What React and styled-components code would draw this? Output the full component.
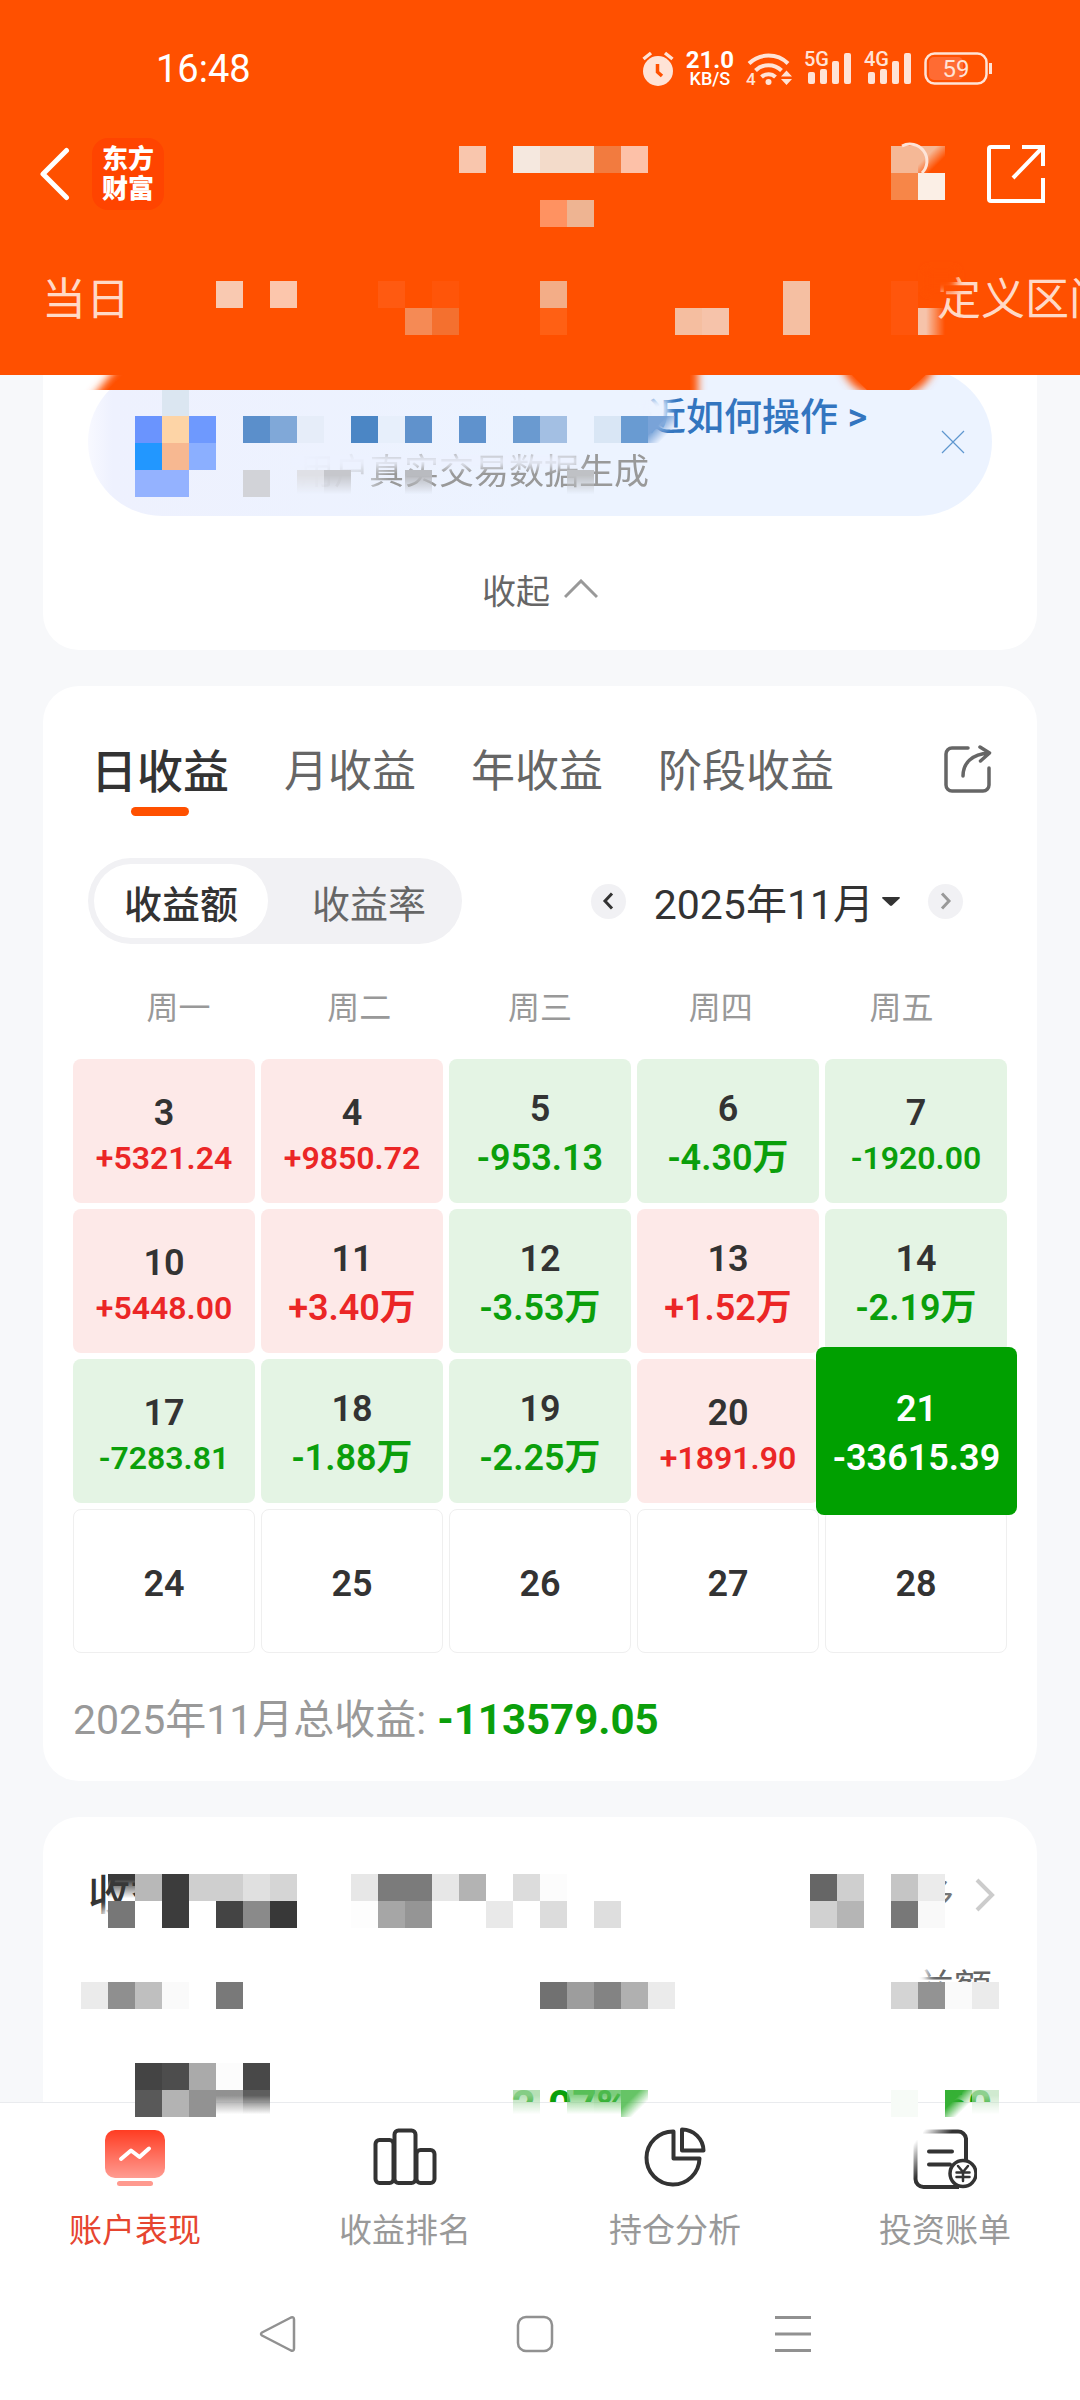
import React from "react";
import styled, { createGlobalStyle, css } from "styled-components";

const GlobalStyle = createGlobalStyle`
  *, *::before, *::after { box-sizing: border-box; }
  html, body, #root { height: 100%; }
  body {
    margin: 0;
    background: #f7f8fa;
    font-family: Roboto, "Noto Sans CJK SC", sans-serif;
    color: #333;
  }
  button {
    border: 0;
    padding: 0;
    background: none;
    font: inherit;
    color: inherit;
    cursor: pointer;
  }
  a { color: inherit; text-decoration: none; }
  ul { margin: 0; padding: 0; list-style: none; }
  p, h1, h2 { margin: 0; }
`;

const CELL = 27;

const Page = styled.div`
  display: flex;
  flex-direction: column;
  height: 100%;
  overflow: hidden;
`;

/* ---------- privacy mosaic ---------- */

const MosaicLayer = styled.svg`
  position: absolute;
  inset: 0;
  width: 100%;
  height: 100%;
  overflow: visible;
  pointer-events: none;
`;

const SharedDefs = styled.svg`
  position: absolute;
  width: 0;
  height: 0;
`;

function Defs() {
  return (
    <SharedDefs aria-hidden="true">
      <defs>
        <linearGradient id="down" x1="0" y1="0" x2="0" y2="1">
          <stop offset="0.2" stopColor="#fff" />
          <stop offset="0.9" stopColor="#000" />
        </linearGradient>
        <linearGradient id="right" x1="0" y1="0" x2="1" y2="0">
          <stop offset="0.3" stopColor="#fff" />
          <stop offset="1" stopColor="#000" />
        </linearGradient>
        <linearGradient id="corner" x1="0" y1="0" x2="1" y2="1">
          <stop offset="0.35" stopColor="#fff" />
          <stop offset="0.7" stopColor="#000" />
        </linearGradient>
        {["down", "right", "corner"].map((name) => (
          <mask key={name} id={`fade-${name}`} maskContentUnits="objectBoundingBox">
            <rect width="1" height="1" fill={`url(#${name})`} />
          </mask>
        ))}
        <filter id="soft" x="-50%" y="-50%" width="200%" height="200%">
          <feGaussianBlur stdDeviation="4" />
        </filter>
      </defs>
    </SharedDefs>
  );
}

/* cells: [column, row, colour, fade?]; veils: [x, y, width, height, colour] */
function Mosaic({ left, top, cells, veils = [], children }) {
  return (
    <MosaicLayer aria-hidden="true">
      {veils.map(([x, y, w, h, fill]) => (
        <rect key={`${x}-${y}`} x={x - left} y={y - top} width={w} height={h} fill={fill} filter="url(#soft)" />
      ))}
      {cells.map(([c, r, fill, fade]) => (
        <rect
          key={`${c}-${r}`}
          x={c * CELL - left}
          y={r * CELL + 11 - top}
          width={CELL}
          height={CELL}
          fill={fill}
          shapeRendering="crispEdges"
          mask={fade ? `url(#fade-${fade})` : undefined}
        />
      ))}
      {children}
    </MosaicLayer>
  );
}

const headerCells = [
  [17, 5, "#f9c6ad"], [19, 5, "#f5e8df"], [20, 5, "#f3dbca"], [21, 5, "#f3dbca"], [22, 5, "#f27b3f"], [23, 5, "#fdc1a8"],
  [20, 7, "#ff9261"], [21, 7, "#eeb492"],
  [33, 5, "#f5b896"], [34, 5, "#f5b896", "corner"], [33, 6, "#f78648"], [34, 6, "#fbefe6"],
  [8, 10, "#f9c9b1"], [10, 10, "#fcc6ac"], [14, 10, "#ff5a11"], [16, 10, "#ff5509"], [20, 10, "#f3ad87"], [29, 10, "#f5bfa2"],
  [15, 11, "#f58a55"], [16, 11, "#f4702f"], [20, 11, "#ff6014"], [25, 11, "#f5bea0"], [26, 11, "#f6c3aa"], [29, 11, "#f5bfa2"],
  [33, 10, "#ff560c"], [33, 11, "#ff560c"], [34, 11, "#f6c3aa", "right"],
];

const bannerCells = [
  [6, 14, "#dbe6f1"],
  [5, 15, "#6a94fe"], [6, 15, "#fdd4a6"], [7, 15, "#6e99fe"], [9, 15, "#5b8fcb"], [10, 15, "#80a8d8"], [11, 15, "#e6edf9"],
  [13, 15, "#4b86c5"], [14, 15, "#e7effb"], [15, 15, "#6092cc"], [17, 15, "#5f92cd"], [19, 15, "#6a9ad0"], [20, 15, "#a3bfe3"],
  [22, 15, "#d9e6f5"], [23, 15, "#699bd2"], [24, 15, "#79a3d8", "corner"],
  [5, 16, "#2297ff"], [6, 16, "#f7b891"], [7, 16, "#8bafff"],
  [5, 17, "#94b2ff"], [6, 17, "#94b2ff"],
  [9, 17, "#d2d3d8"], [11, 17, "#dfe0e6", "down"], [12, 17, "#c6c7cc", "down"], [15, 17, "#b9bbc0", "down"], [21, 17, "#bfc1c5", "down"],
];

const rankCells = [
  [4, 69, "#3a3a3a", "down"], [5, 69, "#b8b8b8"], [6, 69, "#3c3c3c"], [7, 69, "#cfcfcf"], [8, 69, "#cfcfcf"], [9, 69, "#e0e0e0"], [10, 69, "#d5d5d5"],
  [13, 69, "#e7e7e7"], [14, 69, "#7b7b7b"], [15, 69, "#7b7b7b"], [16, 69, "#e7e7e7"], [17, 69, "#b3b3b3"], [19, 69, "#dcdcdc"], [20, 69, "#fcfcfc"],
  [30, 69, "#666"], [31, 69, "#cfcfcf"], [33, 69, "#c5c5c5"], [34, 69, "#ebebeb"],
  [4, 70, "#777"], [5, 70, "#fff"], [6, 70, "#3c3c3c"], [8, 70, "#444"], [9, 70, "#8a8a8a"], [10, 70, "#383838"],
  [13, 70, "#fdfdfd"], [14, 70, "#a6a6a6"], [15, 70, "#959595"], [18, 70, "#e9e9e9"], [20, 70, "#dcdcdc"], [22, 70, "#dedede"],
  [30, 70, "#d1d1d1"], [31, 70, "#b5b5b5"], [33, 70, "#787878"], [34, 70, "#f9f9f9"],
  [3, 73, "#ebebeb"], [4, 73, "#8f8f8f"], [5, 73, "#bfbfbf"], [6, 73, "#fafafa"], [8, 73, "#797979"],
  [20, 73, "#717171"], [21, 73, "#9d9d9d"], [22, 73, "#838383"], [23, 73, "#b0b0b0"], [24, 73, "#ebebeb"],
  [33, 73, "#d4d4d4"], [34, 73, "#939393"], [35, 73, "#fafafa"], [36, 73, "#ebebeb"],
];

const tabBarCells = [
  [5, 76, "#444"], [6, 76, "#4d4d4d"], [7, 76, "#aaa"], [8, 76, "#fcfcfc"], [9, 76, "#484848"],
  [5, 77, "#595959"], [6, 77, "#b3b3b3"], [7, 77, "#929292"], [8, 77, "#919191", "down"], [9, 77, "#5e5e5e", "down"],
  [19, 77, "#a4d8a4cc", "down"], [21, 77, "#6cc76ccc", "down"], [22, 77, "#5cbf5ccc", "down"], [23, 77, "#40b540cc", "corner"],
  [33, 77, "#f7fbf7"], [35, 77, "#35b035", "corner"], [36, 77, "#bfe3bfbb", "down"],
];

/* ---------- header ---------- */

const Header = styled.header`
  position: relative;
  z-index: 1;
  flex: none;
  padding-bottom: 45px;
  background: #ff5000;
  color: #fff;
`;

const StatusBar = styled.div`
  display: flex;
  align-items: center;
  justify-content: space-between;
  height: 138px;
  padding: 0 88px 0 156px;
  font-size: 38px;
`;

const StatusIcons = styled.div`
  display: flex;
  align-items: center;
  gap: 12px;
  color: #ffe3d6;

  svg { overflow: visible; }
`;

const Speed = styled.span`
  display: flex;
  flex-direction: column;
  align-items: center;
  color: #fff;
  font-size: 18px;
  font-weight: 500;
  line-height: 18px;

  strong {
    font-size: 24px;
    font-weight: 700;
    line-height: 20px;
  }
`;

const StatusText = styled.text`
  fill: currentColor;
  font-size: ${(p) => p.$size}px;
  font-weight: ${(p) => p.$weight || 400};
`;

const NavBar = styled.nav`
  display: flex;
  align-items: center;
  gap: 22px;
  height: 72px;
  padding: 0 34px 0 38px;
`;

const IconButton = styled.button`
  display: flex;
  flex: none;
`;

const Logo = styled.h1`
  width: 72px;
  padding: 6px 0;
  border-radius: 16px;
  background: #ff4400;
  font-size: 26px;
  font-weight: 900;
  line-height: 30px;
  text-align: center;
`;

const Spacer = styled.span`
  flex: 1;
`;

const PeriodTabs = styled.div`
  display: flex;
  justify-content: space-between;
  overflow: hidden;
  margin-top: 60px;
  padding-left: 42px;
  color: #ffd9c7;
  font-size: 44px;
  line-height: 60px;
  white-space: nowrap;
`;

const CutOffTab = styled.button`
  margin-right: -33px;
`;

function SignalIcon({ label }) {
  return (
    <svg width="48" height="36" viewBox="0 0 48 36" fill="currentColor" role="img" aria-label={label}>
      <StatusText x="0" y="15" $size="20" $weight="500">{label}</StatusText>
      <rect x="4" y="21" width="7" height="12" rx="2" />
      <rect x="16" y="18" width="7" height="15" rx="2" />
      <rect x="28" y="10" width="7" height="23" rx="2" />
      <rect x="40" y="2" width="7" height="31" rx="2" />
    </svg>
  );
}

function AppHeader() {
  return (
    <Header>
      <StatusBar>
        <span>16:48</span>
        <StatusIcons>
          <svg width="32" height="36" viewBox="0 0 32 36" fill="none" stroke="currentColor" aria-hidden="true">
            <circle cx="16" cy="20" r="15" fill="currentColor" stroke="none" />
            <path d="M1.500 8 9 2M30.500 8 23 2" strokeWidth="3.500" />
            <path d="M15.500 13v8l4.500 4" stroke="#ff5000" strokeWidth="3.500" />
          </svg>
          <Speed><strong>21.0</strong>KB/S</Speed>
          <svg width="46" height="36" viewBox="0 0 46 36" fill="none" stroke="currentColor" strokeWidth="4" aria-hidden="true">
            <path d="M3 12.500a28 28 0 0 1 39 0M9.500 19.500a18.500 18.500 0 0 1 26 0M15.500 26a10 10 0 0 1 14 0" />
            <circle cx="22.500" cy="31" r="3" fill="currentColor" stroke="none" />
            <path d="m35 25.500 5.500-6 5.500 6zM35 28l5.500 6 5.500-6z" fill="currentColor" stroke="none" />
            <StatusText x="0" y="34" $size="17" $weight="500" stroke="none">4</StatusText>
          </svg>
          <SignalIcon label="5G" />
          <SignalIcon label="4G" />
          <svg width="68" height="34" viewBox="0 0 68 34" fill="none" role="img" aria-label="59%">
            <rect x="5" y="5" width="34" height="23" rx="5" fill="#ff6b33" />
            <rect x="1.500" y="1.500" width="61" height="30" rx="9" stroke="currentColor" strokeWidth="2.500" />
            <path d="M66.500 11v11" stroke="currentColor" strokeWidth="3" />
            <StatusText x="32" y="25" $size="24" textAnchor="middle">59</StatusText>
          </svg>
        </StatusIcons>
      </StatusBar>
      <NavBar>
        <IconButton aria-label="返回">
          <svg width="32" height="56" viewBox="0 0 32 56" fill="none" stroke="#fff" strokeWidth="5" strokeLinecap="round" strokeLinejoin="round">
            <path d="M28.500 4.500 5 28l23.500 23.500" />
          </svg>
        </IconButton>
        <Logo>东方<br />财富</Logo>
        <Spacer />
        <IconButton aria-label="分享">
          <svg width="60" height="60" viewBox="0 0 60 60" fill="none" stroke="#fff" strokeWidth="4">
            <path d="M24 3H5a2 2 0 0 0-2 2v50a2 2 0 0 0 2 2h52V34M36 3h21v19M57 3 27 34" />
          </svg>
        </IconButton>
      </NavBar>
      <PeriodTabs>
        <button>当日</button>
        <CutOffTab>定义区间</CutOffTab>
      </PeriodTabs>
      <Mosaic left={0} top={0} cells={headerCells} veils={[[926, 270, 30, 22, "#ff5000"]]}>
        <path d="M902 146a17 17 0 0 1 20 27" fill="none" stroke="#fde4d8" strokeWidth="3" />
        <svg x="0" y="375" width="1080" height="15">
          <path d="M120-12H698V30H86zM838-20H938Q930 22 888 22T838-20z" fill="#ff5000" filter="url(#soft)" />
          <path d="M128-4H690V16H106zM848-4H930L908 16H868z" fill="#ff5000" />
        </svg>
      </Mosaic>
    </Header>
  );
}

/* ---------- content ---------- */

const Main = styled.main`
  display: flex;
  flex: 1;
  flex-direction: column;
  gap: 36px;
  min-height: 0;
  overflow: hidden;
  padding: 0 43px;
`;

const Card = styled.section`
  position: relative;
  flex: none;
  border-radius: 36px;
  background: #fff;
`;

const PromoCard = styled(Card)`
  margin-top: -40px;
  padding: 33px 45px 0;
`;

const Banner = styled.div`
  position: relative;
  display: flex;
  align-items: center;
  height: 148px;
  padding: 0 26px 0 211px;
  border-radius: 74px;
  background: linear-gradient(90deg, #f8f9ff 0, #eef1fe 24px, #ecf3ff 50%);
`;

const BannerText = styled.div`
  display: flex;
  flex: 1;
  flex-direction: column;
  padding-top: 6px;
`;

const BannerLink = styled.a`
  align-self: flex-start;
  margin-left: 349px;
  color: #3375bf;
  font-size: 38px;
  font-weight: 500;
  line-height: 56px;
  white-space: pre;
`;

const BannerNote = styled.p`
  color: #999;
  font-size: 35px;
  line-height: 56px;
  mask-image: linear-gradient(90deg, transparent 0, #0004 60px, #000 90px);
`;

const Collapse = styled.button`
  display: flex;
  align-items: center;
  justify-content: center;
  gap: 14px;
  width: 100%;
  height: 134px;
  padding-top: 12px;
  color: #666;
  font-size: 34px;
`;

const CalendarCard = styled(Card)`
  padding: 51px 30px 31px;
`;

const TabRow = styled.div`
  display: flex;
  align-items: flex-start;
  justify-content: space-between;
  padding: 0 15px 0 18px;
`;

const Tabs = styled.div`
  display: flex;
  gap: 55px;
`;

const Tab = styled.button`
  display: flex;
  flex-direction: column;
  align-items: center;
  color: #666;
  font-size: 44px;
  line-height: 70px;

  &::after {
    content: "";
    width: 58px;
    height: 9px;
    border-radius: 5px;
  }

  ${(p) => p.$active && css`
    color: #333;
    font-size: 46px;
    font-weight: 500;
    &::after { background: #ff5000; }
  `}
`;

const ExportButton = styled(IconButton)`
  padding-top: 8px;
`;

const Toolbar = styled.div`
  display: flex;
  align-items: center;
  justify-content: space-between;
  margin-top: 42px;
  padding: 0 44px 0 15px;
`;

const Segment = styled.div`
  display: flex;
  gap: 14px;
  padding: 6px;
  border-radius: 43px;
  background: #f1f1f4;
`;

const SegmentButton = styled.button`
  height: 74px;
  padding: 0 30px;
  border-radius: 37px;
  color: #666;
  font-size: 38px;

  ${(p) => p.$active && css`
    background: #fff;
    color: #333;
    font-weight: 500;
  `}
`;

const MonthPicker = styled.div`
  display: flex;
  align-items: center;
  gap: 28px;
`;

const StepButton = styled.button`
  display: flex;
  align-items: center;
  justify-content: center;
  width: 35px;
  height: 35px;
  border-radius: 50%;
  background: #f1f1f4;
  color: ${(p) => p.$color};
`;

const MonthButton = styled.button`
  display: flex;
  align-items: center;
  gap: 8px;
  font-size: 41px;
`;

const Weekdays = styled.ul`
  display: grid;
  grid-template-columns: repeat(5, 1fr);
  margin: 40px 15px 27px;
  color: #999;
  font-size: 32px;
  line-height: 48px;
  text-align: center;
`;

const DayGrid = styled.div`
  display: grid;
  grid-template-columns: repeat(5, 1fr);
  gap: 6px;
`;

const tones = {
  up: css`background: #fde9e8; color: #eb2626;`,
  down: css`background: #e4f4e4; color: #0b9f0b;`,
  none: css`border: 1px solid #efefef;`,
  selected: css`
    z-index: 1;
    margin: -12px -10px -12px -9px;
    background: #00a000;
    color: #fff;
  `,
};

const Day = styled.button`
  display: flex;
  flex-direction: column;
  align-items: center;
  justify-content: center;
  height: ${(p) => (p.$tone === "selected" ? 168 : 144)}px;
  padding-top: 5px;
  border-radius: 8px;
  ${(p) => tones[p.$tone]}
`;

const DayNumber = styled.span`
  color: ${(p) => (p.$light ? "#fff" : "#333")};
  font-size: 36px;
  font-weight: 600;
  line-height: 48px;
`;

const Amount = styled.span`
  font-size: ${(p) => (p.$small ? 32 : 36)}px;
  font-weight: 600;
  line-height: ${(p) => (p.$small ? 42 : 50)}px;
`;

const Total = styled.p`
  display: flex;
  gap: 11px;
  margin-top: 37px;
  color: #999;
  font-size: 41px;
  line-height: 60px;

  strong {
    color: #0b9f0b;
    font-size: 42px;
    font-weight: 700;
  }
`;

const RankCard = styled(Card)`
  padding: 47px 41px 60px 45px;
  border-radius: 36px 36px 0 0;
`;

const RankHead = styled.div`
  display: flex;
  align-items: center;
  justify-content: space-between;
  line-height: 60px;

  h2 {
    padding-top: 2px;
    font-size: 42px;
    font-weight: 500;
  }
`;

const MoreLink = styled.a`
  display: flex;
  align-items: center;
  gap: 20px;
  color: #777;
  font-size: 34px;
`;

const RankColumns = styled.div`
  margin: 37px 4px 0 0;
  color: #666;
  font-size: 38px;
  line-height: 50px;
  text-align: right;
`;

const RankRow = styled.div`
  display: grid;
  grid-template-columns: 15fr 7fr 10fr;
  margin: 68px 4px 0 0;
  color: #0b9f0b;
  font-size: 42px;
  font-weight: 700;
  line-height: 50px;

  span:first-child { grid-column: 2; }
  span:last-child { text-align: right; }
`;

const days = [
  [3, "+5321.24"], [4, "+9850.72"], [5, "-953.13"], [6, "-4.30万"], [7, "-1920.00"],
  [10, "+5448.00"], [11, "+3.40万"], [12, "-3.53万"], [13, "+1.52万"], [14, "-2.19万"],
  [17, "-7283.81"], [18, "-1.88万"], [19, "-2.25万"], [20, "+1891.90"], [21, "-33615.39"],
  [24], [25], [26], [27], [28],
];
const SELECTED_DAY = 21;

function toneOf(day, amount) {
  if (day === SELECTED_DAY) return "selected";
  if (!amount) return "none";
  return amount.startsWith("+") ? "up" : "down";
}

function Promo() {
  return (
    <PromoCard>
      <Banner>
        <BannerText>
          <BannerLink href="#operate">近如何操作 &gt;</BannerLink>
          <BannerNote>用户真实交易数据生成</BannerNote>
        </BannerText>
        <IconButton aria-label="关闭">
          <svg width="26" height="26" viewBox="0 0 26 26" fill="none" stroke="#5f97cf" strokeWidth="1.200">
            <path d="m2 2 22 22M24 2 2 24" />
          </svg>
        </IconButton>
        <Mosaic
          left={88}
          top={368}
          cells={bannerCells}
          veils={[[642, 398, 26, 28, "#ecf3ff"], [290, 455, 290, 12, "#edf2ff"]]}
        />
      </Banner>
      <Collapse>
        收起
        <svg width="34" height="20" viewBox="0 0 34 20" fill="none" stroke="#999" strokeWidth="3">
          <path d="M1 18 17 2l16 16" />
        </svg>
      </Collapse>
    </PromoCard>
  );
}

function Calendar() {
  return (
    <CalendarCard>
      <TabRow>
        <Tabs>
          <Tab $active>日收益</Tab>
          <Tab>月收益</Tab>
          <Tab>年收益</Tab>
          <Tab>阶段收益</Tab>
        </Tabs>
        <ExportButton aria-label="导出">
          <svg width="48" height="48" viewBox="0 0 48 48" fill="none" stroke="#666" strokeWidth="3.500" strokeLinecap="round" strokeLinejoin="round">
            <path d="M24 3H8a6 6 0 0 0-6 6v31a6 6 0 0 0 6 6h31a6 6 0 0 0 6-6V23" />
            <path d="M19 31c0-13 9-22 26-23M36 2l9.500 6-9 8" />
          </svg>
        </ExportButton>
      </TabRow>
      <Toolbar>
        <Segment>
          <SegmentButton $active>收益额</SegmentButton>
          <SegmentButton>收益率</SegmentButton>
        </Segment>
        <MonthPicker>
          <StepButton $color="#333" aria-label="上个月">
            <svg width="12" height="18" viewBox="0 0 12 18" fill="none" stroke="currentColor" strokeWidth="3">
              <path d="M10 1.500 3 9l7 7.500" />
            </svg>
          </StepButton>
          <MonthButton>
            2025年11月
            <svg width="18" height="9" viewBox="0 0 18 9" fill="#333">
              <path d="M1 0h16q1.500 0 .5 1.500L10 8.500q-1 .8-2 0L.5 1.500Q-.5 0 1 0z" />
            </svg>
          </MonthButton>
          <StepButton $color="#999" aria-label="下个月">
            <svg width="12" height="18" viewBox="0 0 12 18" fill="none" stroke="currentColor" strokeWidth="3">
              <path d="m2 1.500 7 7.500-7 7.500" />
            </svg>
          </StepButton>
        </MonthPicker>
      </Toolbar>
      <Weekdays>
        {["周一", "周二", "周三", "周四", "周五"].map((name) => <li key={name}>{name}</li>)}
      </Weekdays>
      <DayGrid>
        {days.map(([day, amount]) => (
          <Day key={day} $tone={toneOf(day, amount)}>
            <DayNumber $light={day === SELECTED_DAY}>{day}</DayNumber>
            {amount && <Amount $small={amount.length === 8}>{amount}</Amount>}
          </Day>
        ))}
      </DayGrid>
      <Total>2025年11月总收益: <strong>-113579.05</strong></Total>
    </CalendarCard>
  );
}

function Ranking() {
  return (
    <RankCard>
      <RankHead>
        <h2>收益</h2>
        <MoreLink href="#more">
          多
          <svg width="22" height="34" viewBox="0 0 22 34" fill="none" stroke="#ccc" strokeWidth="4">
            <path d="m3 2 15 15L3 32" />
          </svg>
        </MoreLink>
      </RankHead>
      <RankColumns>益额</RankColumns>
      <RankRow>
        <span>2.07%</span>
        <span>60</span>
      </RankRow>
      <Mosaic
        left={43}
        top={1817}
        cells={rankCells}
        veils={[
          [100, 1908, 80, 20, "#fff"],
          [134, 1860, 50, 8, "#fff"],
          [914, 1870, 20, 50, "#fff"],
          [930, 1908, 20, 12, "#fff"],
          [906, 1960, 22, 40, "#fff"],
          [906, 1996, 100, 20, "#fff"],
        ]}
      />
    </RankCard>
  );
}

/* ---------- bottom ---------- */

const TabBar = styled.nav`
  position: relative;
  display: flex;
  flex: none;
  padding: 23px 0 13px;
  border-top: 1px solid #e9ebee;
  background: #fff;
`;

const TabLink = styled.a`
  display: flex;
  flex: 1;
  flex-direction: column;
  align-items: center;
  gap: 17px;
  color: ${(p) => (p.$active ? "#e6452f" : "#999")};
  font-size: 33px;
  line-height: 48px;
`;

const SystemNav = styled.div`
  display: flex;
  flex: none;
  align-items: center;
  justify-content: center;
  gap: 220px;
  height: 132px;
  padding-right: 10px;
  background: #fff;
`;

function TabIcon({ children }) {
  return (
    <svg width="64" height="64" viewBox="0 0 64 64" fill="none" stroke="#333" strokeWidth="4" strokeLinejoin="round" aria-hidden="true">
      {children}
    </svg>
  );
}

function BottomTabs() {
  return (
    <TabBar>
      <TabLink href="#account" $active>
        <TabIcon>
          <defs>
            <linearGradient id="screen" x1="0" y1="0" x2="0" y2="1">
              <stop offset="0" stopColor="#ff3c22" />
              <stop offset="1" stopColor="#ff9c92" />
            </linearGradient>
          </defs>
          <rect x="2" y="4" width="60" height="48" rx="10" fill="url(#screen)" stroke="none" />
          <rect x="14" y="55" width="36" height="5" rx="2.500" fill="#ff9a8f" stroke="none" />
          <path d="m18 33 10-8.500 8.500 6.500L46 22.500" stroke="#fff" strokeLinecap="round" />
        </TabIcon>
        账户表现
      </TabLink>
      <TabLink href="#rank">
        <TabIcon>
          <rect x="2.500" y="14" width="18" height="43" rx="4" />
          <rect x="21.500" y="4.500" width="21" height="52.500" rx="4" />
          <rect x="43.500" y="24" width="18" height="33" rx="4" />
        </TabIcon>
        收益排名
      </TabLink>
      <TabLink href="#position">
        <TabIcon>
          <path d="M30.500 5.500A26.500 26.500 0 1 0 56.500 32.500H30.500z" />
          <path d="M39 3.500v21h21.500A21.500 21.500 0 0 0 39 3.500z" />
        </TabIcon>
        持仓分析
      </TabLink>
      <TabLink href="#bill">
        <TabIcon>
          <defs>
            <linearGradient id="sheet" gradientUnits="userSpaceOnUse" x1="8" y1="8" x2="26" y2="22">
              <stop offset="0" stopColor="#333" stopOpacity="0" />
              <stop offset="1" stopColor="#333" />
            </linearGradient>
          </defs>
          <path d="M2.500 14v39a8 8 0 0 0 8 8H46M53 34V12.500a8 8 0 0 0-8-7H10" stroke="url(#sheet)" />
          <path d="M16 25.500h23M16 38.500h21" strokeLinecap="round" />
          <circle cx="50" cy="47.500" r="13" fill="#fff" strokeWidth="3.500" />
          <path d="m45 40 5 6 5-6M43.500 46.500h13M43.500 51h13M50 46v9" strokeWidth="2.500" strokeLinecap="round" />
        </TabIcon>
        投资账单
      </TabLink>
      <Mosaic left={0} top={2103} cells={tabBarCells} />
    </TabBar>
  );
}

function SystemButtons() {
  return (
    <SystemNav>
      <IconButton aria-label="系统返回">
        <svg width="38" height="38" viewBox="0 0 38 38" fill="none" stroke="#919191" strokeWidth="2.500" strokeLinejoin="round">
          <path d="M33 2.500 4 17.500q-2 1.500 0 3L33 35.500q3 1 3-2v-29q0-3-3-2z" />
        </svg>
      </IconButton>
      <IconButton aria-label="主屏幕">
        <svg width="38" height="38" viewBox="0 0 38 38" fill="none" stroke="#919191" strokeWidth="2.500">
          <rect x="2" y="2" width="34" height="34" rx="8" />
        </svg>
      </IconButton>
      <IconButton aria-label="最近任务">
        <svg width="38" height="38" viewBox="0 0 38 38" fill="none" stroke="#919191" strokeWidth="3">
          <path d="M1 2.500h36M1 19h36M1 35.500h36" />
        </svg>
      </IconButton>
    </SystemNav>
  );
}

export default function App() {
  return (
    <Page>
      <GlobalStyle />
      <Defs />
      <AppHeader />
      <Main>
        <Promo />
        <Calendar />
        <Ranking />
      </Main>
      <BottomTabs />
      <SystemButtons />
    </Page>
  );
}
